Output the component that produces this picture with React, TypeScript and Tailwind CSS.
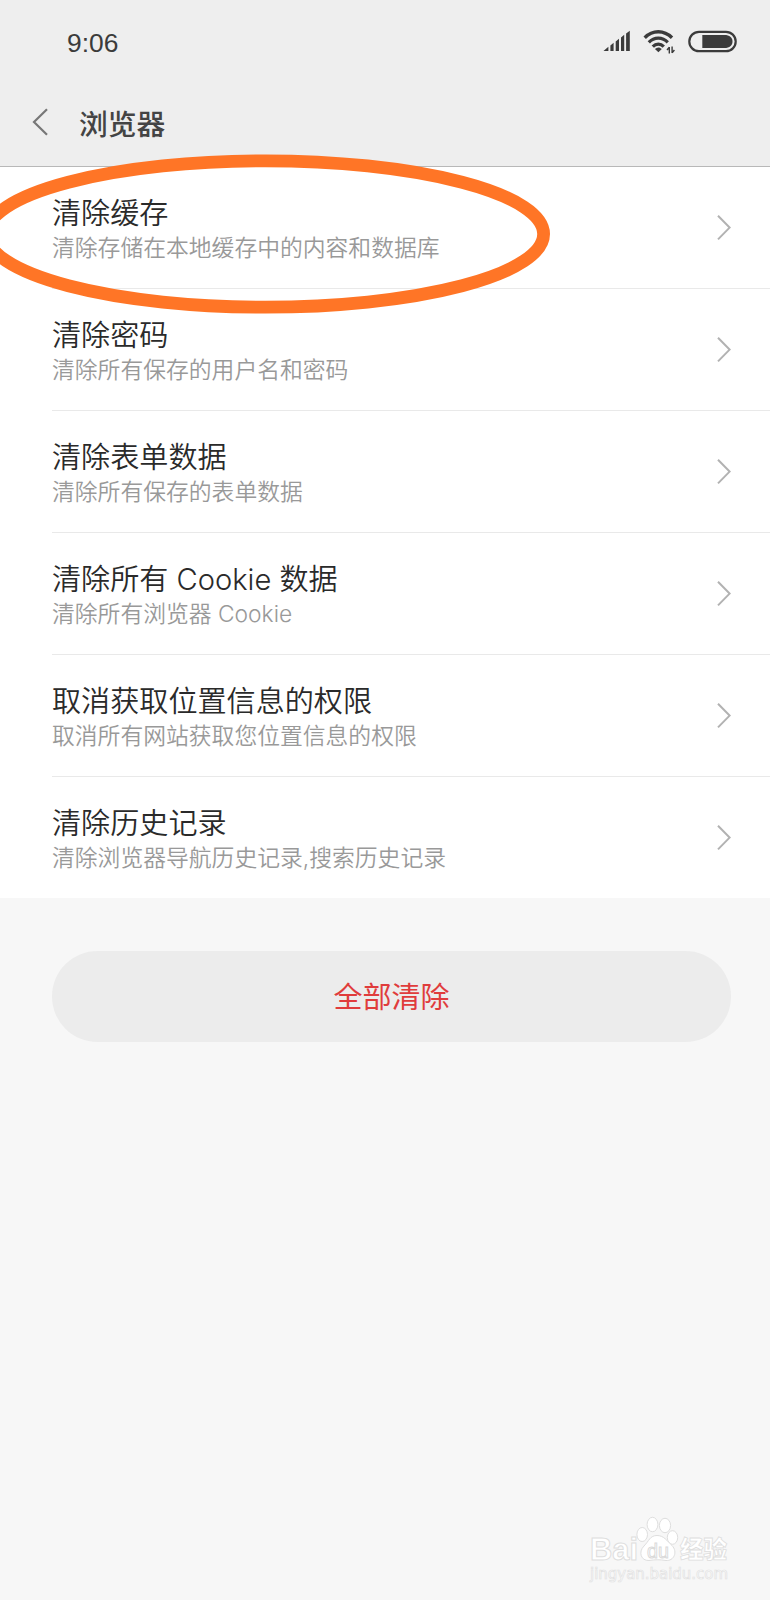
type Item = { title: string; detail: string };

const items: Item[] = [
  { title: "清除缓存", detail: "清除存储在本地缓存中的内容和数据库" },
  { title: "清除密码", detail: "清除所有保存的用户名和密码" },
  { title: "清除表单数据", detail: "清除所有保存的表单数据" },
  { title: "清除所有 Cookie 数据", detail: "清除所有浏览器 Cookie" },
  { title: "取消获取位置信息的权限", detail: "取消所有网站获取您位置信息的权限" },
  { title: "清除历史记录", detail: "清除浏览器导航历史记录,搜索历史记录" },
];

function StatusBar() {
  return (
    <div className="flex h-[82px] items-center justify-between pr-[33px] pl-[67px] text-[#3b3b3b]">
      <span className="mt-[3px] font-['Liberation_Sans',sans-serif] text-[26.4px] leading-8">9:06</span>
      <div className="flex items-center">
        <svg className="h-[22px] w-[27px]" viewBox="0 0 27 22" fill="currentColor">
          <path d="M0.5 21L5.4 16.8V21zM7.4 15.6L10.6 12.8V21H7.4zM12.7 11.4L16 8.8V21H12.7zM18 7.4L21.2 4.8V21H18zM23.1 3.4L26.8 0.8V21H23.1z" />
        </svg>
        <svg className="ml-[13px] h-[26px] w-8" viewBox="0 0 32 26" fill="none" stroke="currentColor">
          <path d="M1.7 9.8C9.6 1.8 21 1.8 29 9.8" strokeWidth="3.4" />
          <path d="M5.8 14.4C11.2 8.8 19.4 8.8 24.8 14.4" strokeWidth="3.2" />
          <path d="M9.8 18.6C13 15.2 17.6 15.2 20.8 18.6" strokeWidth="3.2" />
          <path d="M11.9 21C14.1 18.9 16.6 18.9 18.8 21L15.4 24.2Z" fill="currentColor" stroke="none" />
          <path d="M26.3 19V25.4M26.3 19.3L24 22M29.1 18.5V25M29.1 24.7L31.4 22" strokeWidth="1.4" />
        </svg>
        <svg className="ml-[13px] h-[23px] w-[49px]" viewBox="0 0 49 23">
          <rect x="1.3" y="1.8" width="46.4" height="19.4" rx="9.7" fill="none" stroke="currentColor" strokeWidth="2.2" />
          <path d="M14.3 5H36.5C41.5 5 44.5 7.6 44.5 11.5S41.5 18 36.5 18H14.3z" fill="currentColor" />
        </svg>
      </div>
    </div>
  );
}

function Row({ item, last }: { item: Item; last: boolean }) {
  return (
    <li className="pl-[52px]">
      <div
        className={
          last
            ? "flex h-[121px] items-center justify-between pr-[39px]"
            : "flex h-[122px] items-center justify-between border-b border-[#e9e9e9] pr-[39px]"
        }
      >
        <div className="pt-[3px]">
          <div className="text-[29.1px] leading-[37px] font-[350] text-[#2a2a2a]">{item.title}</div>
          <div className="text-[22.8px] leading-[31px] font-[350] text-[#999]">{item.detail}</div>
        </div>
        <svg className="h-[26px] w-[14px]" viewBox="0 0 14 26" fill="none" stroke="#b2b2b2" strokeWidth="2">
          <path d="M1 0.8L12.6 12.6L1 24.4" />
        </svg>
      </div>
    </li>
  );
}

function Watermark() {
  return (
    <svg className="absolute right-[35px] bottom-[10px] h-[84px] w-[150px]" viewBox="585 1506 150 84">
      <g fill="#fff" stroke="#dedede" strokeWidth="1">
        <text x="590" y="1560" fontFamily="Liberation Sans" fontWeight="700" fontSize="31" textLength="48" lengthAdjust="spacingAndGlyphs">Bai</text>
        <ellipse cx="642.2" cy="1534.5" rx="5.3" ry="7" />
        <ellipse cx="652.5" cy="1524.5" rx="5.4" ry="7.2" />
        <ellipse cx="665" cy="1525.5" rx="5.6" ry="7.2" />
        <ellipse cx="672.5" cy="1537.5" rx="5.2" ry="6.8" />
        <path d="M657 1535.5C664 1535.5 667 1541 672 1545.5C678 1552 674 1561 666 1560.5C660 1559.5 655 1559.5 649 1560.5C641 1561 638 1552 644 1546C649 1541 650 1535.5 657 1535.5Z" />
        <text x="680" y="1558" fontFamily="Noto Sans CJK SC" fontWeight="900" fontSize="23.5" strokeWidth="0.8">经验</text>
      </g>
      <text x="647" y="1557.5" fontFamily="Liberation Sans" fontWeight="400" fontSize="21" textLength="22" lengthAdjust="spacingAndGlyphs" fill="#fff" stroke="#dadada" strokeWidth="1">du</text>
      <text x="590" y="1578.5" fontFamily="DejaVu Sans" fontWeight="400" fontSize="15" textLength="138" lengthAdjust="spacingAndGlyphs" fill="#fff" stroke="#e1e1e1" strokeWidth="0.7">jingyan.baidu.com</text>
    </svg>
  );
}

export default function App() {
  return (
    <main className="relative flex h-[1600px] w-[770px] flex-col overflow-hidden bg-[#f7f7f7] font-[Inter,'Noto_Sans_CJK_SC',sans-serif]">
      <header className="h-[167px] border-b border-[#b8b8b8] bg-[#eee]">
        <StatusBar />
        <div className="flex h-[84px] items-center pl-8">
          <svg className="mb-1 h-[28px] w-4" viewBox="0 0 16 28" fill="none" stroke="#777" strokeWidth="2.2">
            <path d="M15 1.2L2 14L15 26.8" />
          </svg>
          <h1 className="mt-px ml-[31px] text-[28.8px] leading-10 font-medium text-[#444]">浏览器</h1>
        </div>
      </header>
      <ul className="bg-white">
        {items.map((item, i) => (
          <Row key={item.title} item={item} last={i === items.length - 1} />
        ))}
      </ul>
      <button className="mt-[53px] ml-[52px] h-[91px] w-[679px] rounded-full bg-[#ececec] pt-[3px] text-[29px] text-[#e03c3c]">
        全部清除
      </button>
      <svg className="pointer-events-none absolute top-0 left-0 h-[330px] w-[560px]" viewBox="0 0 560 330" fill="none">
        <ellipse cx="265.2" cy="234" rx="278.4" ry="73.2" stroke="#ff7526" strokeWidth="12.8" />
      </svg>
      <Watermark />
    </main>
  );
}
